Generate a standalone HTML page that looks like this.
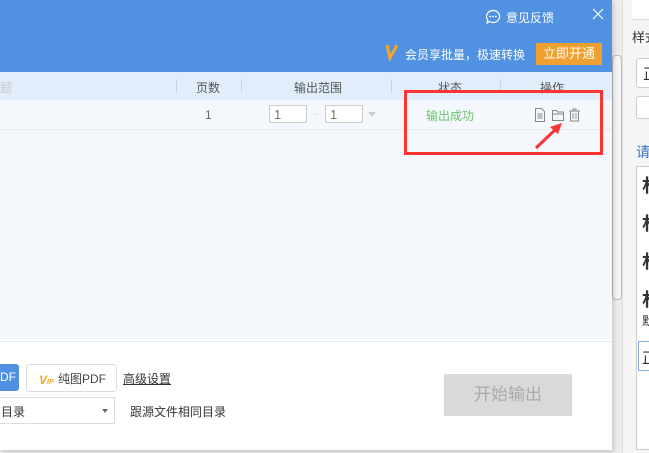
<!DOCTYPE html>
<html><head><meta charset="utf-8"><style>
*{margin:0;padding:0;box-sizing:border-box}
body{width:649px;height:453px;overflow:hidden;background:#e9e9e9;font-family:"Liberation Sans","Noto Sans CJK SC",sans-serif;font-size:12px;color:#333;position:relative}
.a{position:absolute;white-space:nowrap}
</style></head><body>
<div class="a" style="left:612px;top:0;width:37px;height:453px;background:#ececec"></div>
<div class="a" style="left:622px;top:0;width:27px;height:453px;background:#f5f5f5;border-left:1px solid #ddd"></div>
<div class="a" style="left:632px;top:0;width:17px;height:20px;border-bottom:1px solid #ddd;background:#fff"></div>
<div class="a" style="left:632px;top:27px;font-size:13px;color:#333">样式</div>
<div class="a" style="left:636px;top:58px;width:20px;height:30px;border:1px solid #ccc;border-radius:3px;background:#fff;font-size:15px;padding:4px 0 0 6px">正</div>
<div class="a" style="left:636px;top:96px;width:20px;height:23px;border:1px solid #ccc;border-radius:3px;background:#fff"></div>
<div class="a" style="left:636px;top:142px;font-size:14px;color:#3a6fc0">请</div>
<div class="a" style="left:636px;top:166px;width:20px;height:284px;border:1px solid #ccc;background:#fff;font-size:18px;line-height:38px;padding-left:5px;font-weight:bold;overflow:hidden">朴<br>朴<br>朴<br>朴</div>
<div class="a" style="left:642px;top:312px;font-size:12px">默</div>
<div class="a" style="left:638px;top:341px;width:20px;height:30px;border:1px solid #8aaad8;background:#fff;font-size:15px;padding:5px 0 0 3px">正</div>
<div class="a" style="left:612px;top:55px;width:10px;height:245px;border:1px solid #bbb;border-radius:4px;background:#f4f4f4"></div>

<div class="a" style="left:0;top:0;width:612px;height:450px;background:#fff;box-shadow:2px 2px 4px rgba(0,0,0,.15)"></div>
<div class="a" style="left:0;top:0;width:612px;height:72px;background:#5091e1"></div>
<svg class="a" style="left:485px;top:9px" width="16" height="16" viewBox="0 0 16 16"><path d="M8 1.5a6.5 6 0 1 1-3.5 11L2 14l.8-3A6.5 6 0 0 1 8 1.5z" fill="none" stroke="#fff" stroke-width="1.2"/><circle cx="5.2" cy="7.5" r=".9" fill="#fff"/><circle cx="8" cy="7.5" r=".9" fill="#fff"/><circle cx="10.8" cy="7.5" r=".9" fill="#fff"/></svg>
<div class="a" style="left:506px;top:9px;color:#fff;font-size:12px">意见反馈</div>
<svg class="a" style="left:592px;top:8px" width="12" height="12" viewBox="0 0 12 12"><path d="M1 1l10 10M11 1L1 11" stroke="#fff" stroke-width="1.2"/></svg>
<svg class="a" style="left:385px;top:43px" width="14" height="18" viewBox="0 0 14 18"><path d="M2 2l3 13L12 2" fill="none" stroke="#f5a623" stroke-width="3"/></svg>
<div class="a" style="left:405px;top:46px;color:#fff;font-size:12px">会员享批量，极速转换</div>
<div class="a" style="left:536px;top:43px;width:66px;height:22px;background:#f0a02e;color:#fff;font-size:13px;text-align:center;line-height:22px">立即开通</div>

<div class="a" style="left:0;top:72px;width:612px;height:28px;background:#e1edfb"></div>
<div class="a" style="left:0;top:79px;color:#ccc;font-size:12px">题</div>
<div class="a" style="left:176px;top:79px;width:1px;height:14px;background:#c8d6e8"></div>
<div class="a" style="left:241px;top:79px;width:1px;height:14px;background:#c8d6e8"></div>
<div class="a" style="left:391px;top:79px;width:1px;height:14px;background:#c8d6e8"></div>
<div class="a" style="left:500px;top:79px;width:1px;height:14px;background:#c8d6e8"></div>
<div class="a" style="left:196px;top:79px;color:#555">页数</div>
<div class="a" style="left:294px;top:79px;color:#555">输出范围</div>
<div class="a" style="left:438px;top:79px;color:#555">状态</div>
<div class="a" style="left:540px;top:79px;color:#555">操作</div>

<div class="a" style="left:0;top:100px;width:612px;height:240px;background:#f4f7fc"></div>
<div class="a" style="left:0;top:129px;width:612px;height:1px;background:#e6e9ee"></div>
<div class="a" style="left:205px;top:108px;color:#666">1</div>
<div class="a" style="left:269px;top:105px;width:38px;height:18px;border:1px solid #ccc;background:#fff;color:#777;padding:1px 4px;font-size:13px">1</div>
<div class="a" style="left:310px;top:108px;color:#ddd;font-size:10px">→</div>
<div class="a" style="left:325px;top:105px;width:38px;height:18px;border:1px solid #ccc;background:#fff;color:#777;padding:1px 4px;font-size:13px">1</div>
<div class="a" style="left:368px;top:112px;width:0;height:0;border-left:4px solid transparent;border-right:4px solid transparent;border-top:5px solid #ccc"></div>
<div class="a" style="left:426px;top:107px;color:#6cc56c;font-size:12px">输出成功</div>
<svg class="a" style="left:533px;top:108px" width="52" height="14" viewBox="0 0 52 14" fill="none" stroke="#888" stroke-width="1"><path d="M2.5 .5h6l3 3v10h-9z M4.5 6h5M4.5 8h5M4.5 10h5"/><path d="M19.5 2.5h4l1 1.5h6v8.5h-11z M19.5 6h11"/><path d="M36 3h11M40 3V1h3v2M37.5 3v10h8V3M40 5v6M43 5v6"/></svg>
<div class="a" style="left:404px;top:90px;width:199px;height:65px;border:3px solid #f33"></div>
<svg class="a" style="left:530px;top:120px" width="40" height="32" viewBox="0 0 40 32"><path d="M6 28L27 8" stroke="#f33" stroke-width="3"/><path d="M32 3l-12 4 8 7z" fill="#f33"/></svg>

<div class="a" style="left:0;top:341px;width:612px;height:1px;background:#e6e9ee"></div>
<div class="a" style="left:0;top:364px;width:19px;height:27px;background:#4f90e0;border-radius:0 3px 3px 0;color:#fff;font-size:12px;line-height:27px">DF</div>
<div class="a" style="left:26px;top:364px;width:91px;height:28px;border:1px solid #ddd;border-radius:3px;background:#fff"></div>
<div class="a" style="left:39px;top:373px;color:#f5a623;font-weight:bold;font-size:12px;font-style:italic">V<span style="font-size:7px">IP</span></div>
<div class="a" style="left:58px;top:370px;color:#444;font-size:12px">纯图PDF</div>
<div class="a" style="left:123px;top:370px;color:#333;font-size:12px;text-decoration:underline">高级设置</div>
<div class="a" style="left:-2px;top:397px;width:117px;height:27px;border:1px solid #ddd;background:#fff;color:#333;font-size:12px;padding:5px 0 0 2px">目录</div>
<div class="a" style="left:102px;top:409px;width:0;height:0;border-left:3.5px solid transparent;border-right:3.5px solid transparent;border-top:4px solid #666"></div>
<div class="a" style="left:130px;top:403px;color:#333;font-size:12px">跟源文件相同目录</div>
<div class="a" style="left:444px;top:374px;width:128px;height:42px;background:#d9d9d9;border-radius:2px;color:#aaa;font-size:17px;text-align:center;line-height:42px">开始输出</div>
</body></html>
